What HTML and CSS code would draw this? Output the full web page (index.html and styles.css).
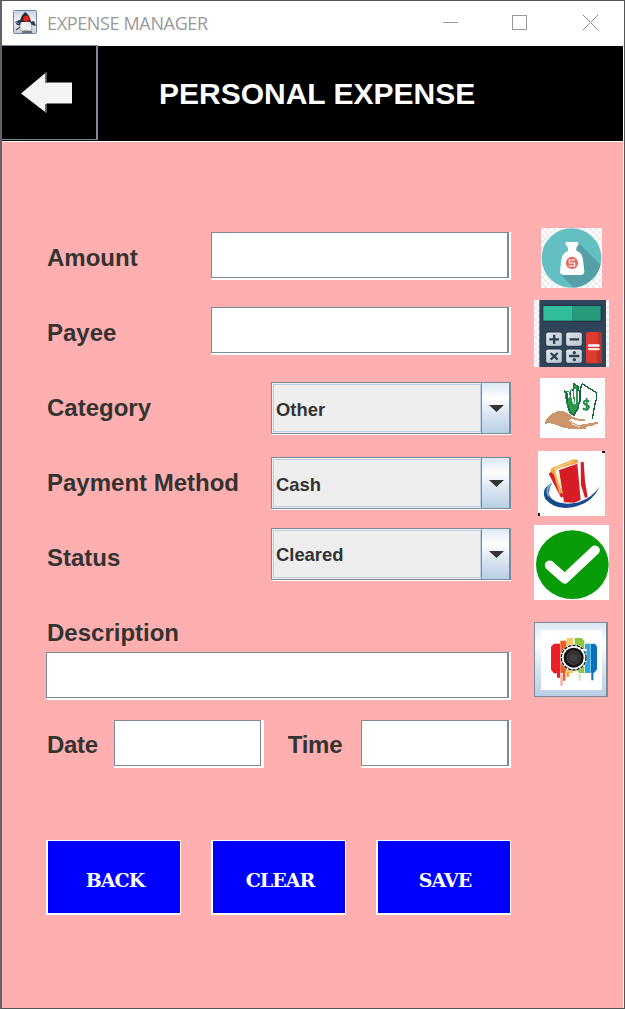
FILE: index.html
```html
<!DOCTYPE html>
<html lang="en">
<head>
<meta charset="utf-8">
<title>EXPENSE MANAGER</title>
<link rel="stylesheet" href="styles.css">
</head>
<body>
<div class="window">
  <header class="titlebar">
    <svg class="app-icon" viewBox="0 0 24 24">
      <defs><linearGradient id="duke" x1="0" y1="0" x2="0" y2="1"><stop offset="0" stop-color="#c4d2e2"/><stop offset=".45" stop-color="#f2f4f8"/><stop offset="1" stop-color="#c8ccd6"/></linearGradient></defs>
      <rect x=".5" y=".5" width="23" height="23" rx="1" fill="url(#duke)" stroke="#6d87a6"/>
      <path d="M2 12l4-2 4 1-1 5-5-1zM16 12l5-1 2 5-4-1z" fill="#2c4052"/>
      <path d="M3 12l3 1v1l-3-1z" fill="#6fa8d8"/>
      <path d="M9 10q-3 6-2 10l3 1 3-1 4 1 2-2q0-5-3-9z" fill="#f0f0f0" stroke="#888" stroke-width=".6"/>
      <path d="M12 2q-5 5-5 10l4 0 7 0q-1-7-6-10z" fill="#302c30"/>
      <circle cx="13.200" cy="8.800" r="3" fill="#e3201f"/>
      <path d="M9 22h10M3 20l4-3" stroke="#555" stroke-width="1.400"/>
    </svg>
    <span class="app-name">EXPENSE MANAGER</span>
    <svg class="win-controls" viewBox="0 0 156 16" shape-rendering="crispEdges">
      <path d="M0 8.500h15" stroke="#999" fill="none"/>
      <rect x="69.500" y="1.500" width="14" height="14" stroke="#999" fill="none"/>
      <path d="M140 1l15 15M155 1l-15 15" stroke="#8a8a8a" fill="none" shape-rendering="auto"/>
    </svg>
  </header>
  <div class="banner">
    <button class="back-arrow" aria-label="Go back">
      <svg viewBox="0 0 51 41"><path d="M25.500 0V10.500H51V31.500H25.500V41L0 21.500Z" fill="#f4f4f4"/><path d="M25 0v11M25 32v9" stroke="#444" stroke-width="1.500"/></svg>
    </button>
    <h1>PERSONAL EXPENSE</h1>
  </div>
  <main class="content">
    <form class="form">
      <div class="row"><label>Amount</label><input class="field wide"></div>
      <div class="row"><label>Payee</label><input class="field wide"></div>
      <div class="row"><label>Category</label><div class="combo"><span class="value">Other</span><span class="drop"><i></i></span></div></div>
      <div class="row"><label>Payment Method</label><div class="combo"><span class="value">Cash</span><span class="drop"><i></i></span></div></div>
      <div class="row"><label>Status</label><div class="combo raised"><span class="value">Cleared</span><span class="drop"><i></i></span></div></div>
      <div class="description"><label>Description</label><input class="field full"></div>
      <div class="row datetime"><label>Date</label><input class="field date"><label class="time-label">Time</label><input class="field time"></div>
      <div class="actions"><button type="button">BACK</button><button type="button">CLEAR</button><button type="button">SAVE</button></div>
    </form>
    <aside class="icons">
      <svg class="ic-bag" viewBox="48 24 183 180">
        <defs>
          <pattern id="chk" x="48" y="24" width="18" height="18" patternUnits="userSpaceOnUse"><rect width="18" height="18" fill="#fff"/><path d="M0 0h9v9H0zM9 9h9v9H9z" fill="#ededed"/></pattern>
          <clipPath id="disc"><circle cx="139.500" cy="114" r="89.500"/></clipPath>
        </defs>
        <rect x="48" y="24" width="183" height="180" fill="url(#chk)"/>
        <circle cx="139.500" cy="114" r="89.500" fill="#63bfc1"/>
        <path d="M158 66L235 143V210H152L106 163z" fill="#55a0a6" clip-path="url(#disc)"/>
        <path d="M122 66h38v8l-6 9v9q18 6 20 28l4 34q0 11-11 11h-51q-11 0-11-11l4-34q2-20 20-28v-9l-7-9z" fill="#fff"/>
        <circle cx="141" cy="129" r="18.500" fill="#e96b5d"/>
        <path d="M150 120H133v9h16v9H131" fill="none" stroke="#fff" stroke-width="3.500"/>
      </svg>
      <svg class="ic-calc" viewBox="27 240 225 201">
        <defs>
          <pattern id="chk2" x="27" y="240" width="18" height="18" patternUnits="userSpaceOnUse"><rect width="18" height="18" fill="#fff"/><path d="M0 0h9v9H0zM9 9h9v9H9z" fill="#e9ebee"/></pattern>
          <linearGradient id="key" x1="0" y1="0" x2="1" y2="1"><stop offset="0" stop-color="#e2e8ee"/><stop offset="1" stop-color="#b8c3ce"/></linearGradient>
        </defs>
        <rect x="27" y="240" width="225" height="201" fill="url(#chk2)"/>
        <rect x="43" y="240" width="200" height="201" fill="#2f435a"/>
        <rect x="53" y="254" width="179" height="52" rx="4" fill="#243748"/>
        <rect x="55" y="258" width="88" height="44" fill="#2fbd9b"/><rect x="143" y="258" width="84" height="44" fill="#279a7c"/>
        <g stroke="#223448" stroke-width="3">
          <rect x="62" y="336" width="50" height="43" rx="7" fill="url(#key)"/><rect x="122" y="336" width="50" height="43" rx="7" fill="url(#key)"/>
          <rect x="62" y="387" width="50" height="43" rx="7" fill="url(#key)"/><rect x="122" y="387" width="50" height="43" rx="7" fill="url(#key)"/>
        </g>
        <rect x="183" y="336" width="48" height="94" rx="7" fill="#df3b31"/><path d="M219 336h5q7 0 7 7v80q0 7-7 7h-9z" fill="#b93429"/>
        <path d="M73 358h29M87.500 344v28M134 358h28M77 399l21 20M98 399L77 419M132 408h31" stroke="#2f4052" stroke-width="7"/>
        <circle cx="148" cy="398" r="5" fill="#2f4052"/><circle cx="148" cy="419" r="5" fill="#2f4052"/>
        <rect x="189" y="373" width="35" height="7" rx="3" fill="#fff"/><rect x="189" y="384" width="35" height="7" rx="3" fill="#ffe4db"/>
      </svg>
      <svg class="ic-hand" viewBox="45 24 195 180" shape-rendering="crispEdges">
        <rect x="45" y="24" width="195" height="180" fill="#fff"/>
        <path d="M60 162l3-15 9-6 6-9 13-5 6-4h19l5 4 14 6 9 8 16 5h19v8h-13l-12-4-16-4-4 4 14 10 16 6 16-5 22-1 15-6 4 5-18 8-20 4v6h-40l-26-3-17-7-14-5-16-3z" fill="#cc966a"/>
        <path d="M134 150l10 13 20 8" fill="none" stroke="#f3dbc8" stroke-width="3"/>
        <path d="M117 62h15l4 8 9 28-1-55 14 2v14l6 40-4 20-13 18-12-5-8-18z" fill="#2f9748"/>
        <path d="M129 66l4 16M138 68l9 34M150 56l2 46M160 50v52" stroke="#fff" stroke-width="5"/>
        <path d="M117 62l9 8v25l9 33 12 8 13-26 5-26M136 59v22M145 38v22l-6-1M147 42l12 6v14" fill="none" stroke="#176d40" stroke-width="4"/>
        <path d="M171 41l43 27v20l-6 22-6 36M171 41l-6 20v36" fill="none" stroke="#12603f" stroke-width="4"/>
        <path d="M193 94q-16-6-17 3 0 6 9 8 10 3 6 9-5 8-18 1M185 84v39" fill="none" stroke="#238b4a" stroke-width="5.500" shape-rendering="auto"/>
      </svg>
      <svg class="ic-cards" viewBox="39 243 201 195">
        <rect x="39" y="243" width="201" height="195" fill="#fff"/>
        <path d="M80 339q-34 18-19 48 32 38 95 22 49-14 68-60-21 34-63 48-51 11-79-9-19-14-2-49z" fill="#164a8e"/>
        <path d="M79 341q-20 16-7 38" fill="none" stroke="#7fb0cf" stroke-width="6"/>
        <path d="M71 311l12-9 33 77-8 4z" fill="#d71e27"/>
        <path d="M80 294l66-26 13 2v9l-59 16-10 9 21 66-8 1-17-57-10-10z" fill="#f1a442"/>
        <path d="M85 297l10 1 16 63M91 294l55-20" fill="none" stroke="#ffe1a9" stroke-width="3"/>
        <path d="M102 300l55-19 10 109-19 8-31-1z" fill="#d71c25"/>
        <path d="M167 277l9-2 4 58 8 48-8 3-12-38z" fill="#d71c25"/>
        <path d="M231 243h9v6h-9zM39 429h6v9h-6z" fill="#2b1719"/>
      </svg>
      <svg class="ic-check" viewBox="27 15 225 225">
        <rect x="27" y="15" width="225" height="225" fill="#fff"/>
        <ellipse cx="142" cy="134" rx="109" ry="103" fill="#079b07"/>
        <path d="M74 136L119 176L210 91" fill="none" stroke="#fff" stroke-width="29" stroke-linecap="round" stroke-linejoin="round"/>
      </svg>
      <button class="camera" aria-label="Camera">
        <svg viewBox="48 330 183 180">
          <rect x="48" y="330" width="183" height="180" fill="#fff"/>
          <path d="M87 371h18v102h-9v-13H86l-8-11v-69z" fill="#eb1f27"/>
          <path d="M106 362h18v92h-3v28h-7v-22h-8z" fill="#f15a24"/><path d="M106 463h7v34h-7z" fill="#f8a9a0"/>
          <path d="M125 354h19v106h-10v10h-9z" fill="#f9cc63"/><path d="M125 456h6v14h-6z" fill="#f39b32"/>
          <path d="M149 354h21l8 8v97h-17v-5h-12z" fill="#8dc63f"/><path d="M161 462h6v20h-6z" fill="#cce6ad"/>
          <path d="M180 371h16v88h-16z" fill="#27a9e1"/>
          <path d="M197 371h13l6 9v68l-8 10h-3v23h-6v-23h-2z" fill="#0870bc"/>
          <circle cx="146" cy="413" r="40" fill="#fff"/>
          <circle cx="146" cy="413" r="37" fill="none" stroke="#151515" stroke-width="4" stroke-dasharray="10 3"/>
          <circle cx="146" cy="413" r="30" fill="#111"/><circle cx="146" cy="413" r="21" fill="#303030" stroke="#555" stroke-width="2"/><circle cx="146" cy="413" r="12" fill="#3e3e3e"/>
          <path d="M171 387h14v7h-14z" fill="#fff"/>
        </svg>
      </button>
    </aside>
  </main>
</div>
</body>
</html>
```
FILE: styles.css
```css
* { box-sizing: border-box; }
body { margin: 0; font-family: "Liberation Sans", Arial, sans-serif; }
button, input { font: inherit; margin: 0; padding: 0; border-radius: 0; outline: 0; }
svg { display: block; flex: none; }
.window { width: 625px; height: 1009px; border: 1px solid #555; border-left: 2px solid #646068; background: #fff; padding-right: 1px; display: flex; flex-direction: column; overflow: hidden; }
.titlebar { height: 45px; flex: none; display: flex; padding: 9px 24px 0 11px; }
.app-icon { width: 24px; height: 24px; }
.app-name { margin-left: 10px; font: 18px/26px "Open Sans", "Noto Sans", sans-serif; color: #999; white-space: nowrap; letter-spacing: -.35px; }
.win-controls { width: 156px; height: 16px; margin: 4px 0 0 auto; }
.banner { height: 96px; flex: none; display: flex; background: #000; border-bottom: 1px solid #fff; }
.back-arrow { width: 96px; height: 95px; margin-top: -1px; border: solid #7a8a99; border-width: 1px 2px 1px 0; background: #000; padding: 0 0 0 19px; display: flex; align-items: center; }
.back-arrow svg { width: 51px; height: 41px; }
.banner h1 { margin: 0 0 0 61px; font-size: 30px; line-height: 96px; color: #fff; font-weight: bold; white-space: nowrap; }
.content { flex: 1; background: #ffafaf; display: flex; padding: 90px 14px 0 44px; }
.form { width: 465px; font-weight: bold; font-size: 24px; color: #333; }
.row { height: 50px; margin-bottom: 25px; display: flex; justify-content: space-between; align-items: flex-start; }
.row label, .description label { line-height: 52px; padding-left: 1px; white-space: nowrap; }
.field { display: block; height: 46px; border: 1px solid #7a8a99; border-right-width: 2px; background: #fff; box-shadow: 2px 2px 0 #fff, 2px 0 0 #fff, 0 2px 0 #fff; }
.wide { width: 298px; margin-right: 2px; }
.full { width: 463px; }
.combo { width: 240px; height: 52px; border: 1px solid #7a8a99; border-right-width: 2px; box-shadow: 0 1px 0 #fff; background: #eee; display: flex; padding-left: 1px; }
.raised { margin-top: -4px; }
.value { flex: 1; margin: 1px 0; padding-left: 2px; border: 1px solid #b8cfe5; font-size: 18.4px; line-height: 50px; }
.raised .value { line-height: 48px; }
.drop { width: 28px; border-left: 1px solid #7a8a99; background: linear-gradient(#dce7f2, #fff 30%, #dbe6f1 60%, #b8cfe5); display: flex; justify-content: center; padding: 22px 0 0 2px; }
.drop i { width: 15px; height: 7px; background: #333; clip-path: polygon(0 0, 100% 0, 50% 100%); }
.description { height: 113px; }
.description label { display: block; height: 45px; }
.row.datetime { justify-content: flex-start; margin-bottom: 70px; }
.datetime label { line-height: 50px; letter-spacing: -.3px; }
.date { width: 147px; border-right-width: 1px; margin-left: 16px; box-shadow: 3px 2px 0 #fff, 3px 0 0 #fff, 0 2px 0 #fff; }
.time { width: 148px; margin: 0 2px 0 auto; }
.time-label { margin-left: 26px; }
.actions { display: flex; gap: 30px; }
.actions button { width: 135px; height: 75px; border: solid #fff; border-width: 1px 1px 2px 2px; background: #00f; color: #fff; font: bold 19px "DejaVu Serif", serif; letter-spacing: -1px; padding: 5px 0 0 2px; }
.icons { width: 75px; margin: -4px 0 0 23px; }
.ic-bag { width: 61px; height: 60px; margin-left: 7px; }
.ic-calc { width: 75px; height: 67px; margin-top: 12px; }
.ic-hand { width: 65px; height: 60px; margin: 11px 0 0 6px; }
.ic-cards { width: 67px; height: 65px; margin: 13px 0 0 4px; }
.ic-check { width: 75px; height: 75px; margin-top: 9px; }
.camera { display: flex; align-items: flex-start; width: 74px; height: 75px; margin-top: 22px; padding: 7px 0 0 6px; border: 1px solid #7a8a99; border-right-width: 2px; background: linear-gradient(#dce7f2, #fff 30%, #dbe6f1 60%, #b8cfe5); }
.camera svg { width: 61px; height: 60px; }
```
